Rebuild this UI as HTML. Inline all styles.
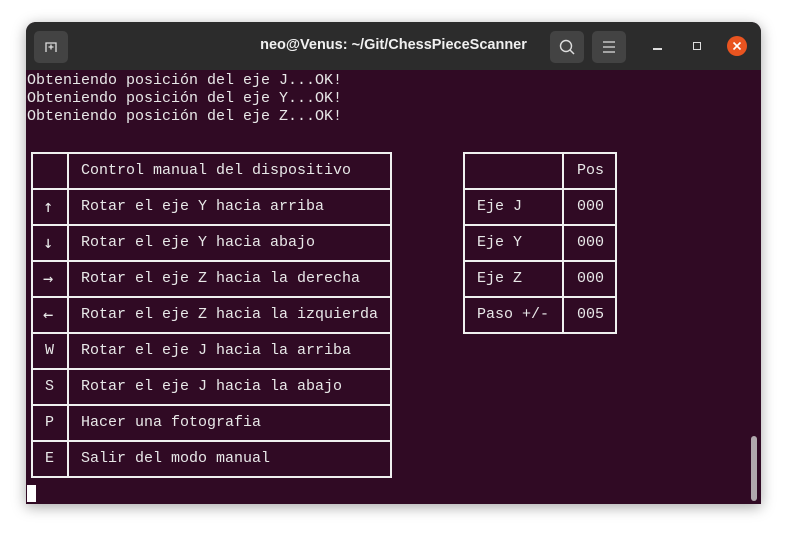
<!DOCTYPE html>
<html><head><meta charset="utf-8"><style>
*{margin:0;padding:0;box-sizing:border-box}
body{width:786px;height:533px;background:#fff;position:relative;overflow:hidden;font-family:"Liberation Mono",monospace}
.win{position:absolute;left:26px;top:22px;width:735px;height:482px;background:#300a24;border-radius:10px 10px 0 0;box-shadow:0 3px 14px rgba(0,0,0,.35);overflow:hidden}
.tb{position:absolute;left:0;top:0;width:735px;height:48px;background:#2c2c2c}
.btn{position:absolute;top:9px;width:34px;height:32px;background:#434343;border-radius:5px}
.title{position:absolute;left:0;width:735px;top:15px;text-align:center;color:#f0f0f0;font:bold 14.5px "Liberation Sans",sans-serif}
.t{position:absolute;color:#e8e8e8;font-size:15px;line-height:18px;white-space:pre}
.hl{position:absolute;height:2px;background:#f0f0f0}
.vl{position:absolute;width:2px;background:#f0f0f0}
</style></head><body>
<div class="win">
<div class="tb">
 <div class="btn" style="left:8px"><svg width="34" height="32"><path d="M12 21V12h10v9M17 13.5v5M14.5 16h5" stroke="#ddd" stroke-width="1.3" fill="none"/></svg></div>
 <div class="title">neo@Venus: ~/Git/ChessPieceScanner</div>
 <div class="btn" style="left:524px"><svg width="34" height="32"><circle cx="16" cy="15" r="5.5" stroke="#ddd" stroke-width="1.4" fill="none"/><path d="M20 19l4 4" stroke="#ddd" stroke-width="1.5"/></svg></div>
 <div class="btn" style="left:566px"><svg width="34" height="32"><path d="M11 11h12M11 16h12M11 21h12" stroke="#ddd" stroke-width="1.3"/></svg></div>
 <div style="position:absolute;left:627px;top:26px;width:9px;height:1.5px;background:#ddd"></div>
 <div style="position:absolute;left:667px;top:20px;width:8px;height:8px;border:1.4px solid #ddd"></div>
 <div style="position:absolute;left:701px;top:14px;width:20px;height:20px;border-radius:50%;background:#e95420"><svg width="20" height="20"><path d="M6.5 6.5l7 7M13.5 6.5l-7 7" stroke="#fff" stroke-width="1.6"/></svg></div>
</div>
<div style="position:absolute;left:725px;top:414px;width:6px;height:65px;background:#b0a8ad;border-radius:3px"></div>
<div style="position:absolute;left:1px;top:463px;width:9px;height:17px;background:#fff"></div>
</div>
<div class="t" style="left:27px;top:72px">Obteniendo posición del eje J...OK!
Obteniendo posición del eje Y...OK!
Obteniendo posición del eje Z...OK!</div>

<!-- left table -->
<div class="vl" style="left:31px;top:152px;height:326px"></div>
<div class="vl" style="left:67px;top:152px;height:326px"></div>
<div class="vl" style="left:390px;top:152px;height:326px"></div>
<div class="hl" style="left:31px;top:152px;width:361px"></div>
<div class="hl" style="left:31px;top:188px;width:361px"></div>
<div class="hl" style="left:31px;top:224px;width:361px"></div>
<div class="hl" style="left:31px;top:260px;width:361px"></div>
<div class="hl" style="left:31px;top:296px;width:361px"></div>
<div class="hl" style="left:31px;top:332px;width:361px"></div>
<div class="hl" style="left:31px;top:368px;width:361px"></div>
<div class="hl" style="left:31px;top:404px;width:361px"></div>
<div class="hl" style="left:31px;top:440px;width:361px"></div>
<div class="hl" style="left:31px;top:476px;width:361px"></div>
<div class="t" style="left:43px;top:189px;line-height:36px;font-family:'DejaVu Sans Mono',monospace;font-size:17px">↑
↓
→
←</div>
<div class="t" style="left:45px;top:333px;line-height:36px">W
S
P
E</div>
<div class="t" style="left:81px;top:153px;line-height:36px">Control manual del dispositivo
Rotar el eje Y hacia arriba
Rotar el eje Y hacia abajo
Rotar el eje Z hacia la derecha
Rotar el eje Z hacia la izquierda
Rotar el eje J hacia la arriba
Rotar el eje J hacia la abajo
Hacer una fotografia
Salir del modo manual</div>

<!-- right table -->
<div class="vl" style="left:463px;top:152px;height:182px"></div>
<div class="vl" style="left:562px;top:152px;height:182px"></div>
<div class="vl" style="left:615px;top:152px;height:182px"></div>
<div class="hl" style="left:463px;top:152px;width:154px"></div>
<div class="hl" style="left:463px;top:188px;width:154px"></div>
<div class="hl" style="left:463px;top:224px;width:154px"></div>
<div class="hl" style="left:463px;top:260px;width:154px"></div>
<div class="hl" style="left:463px;top:296px;width:154px"></div>
<div class="hl" style="left:463px;top:332px;width:154px"></div>
<div class="t" style="left:477px;top:189px;line-height:36px">Eje J
Eje Y
Eje Z
Paso +/-</div>
<div class="t" style="left:577px;top:153px;line-height:36px">Pos
000
000
000
005</div>
</body></html>
